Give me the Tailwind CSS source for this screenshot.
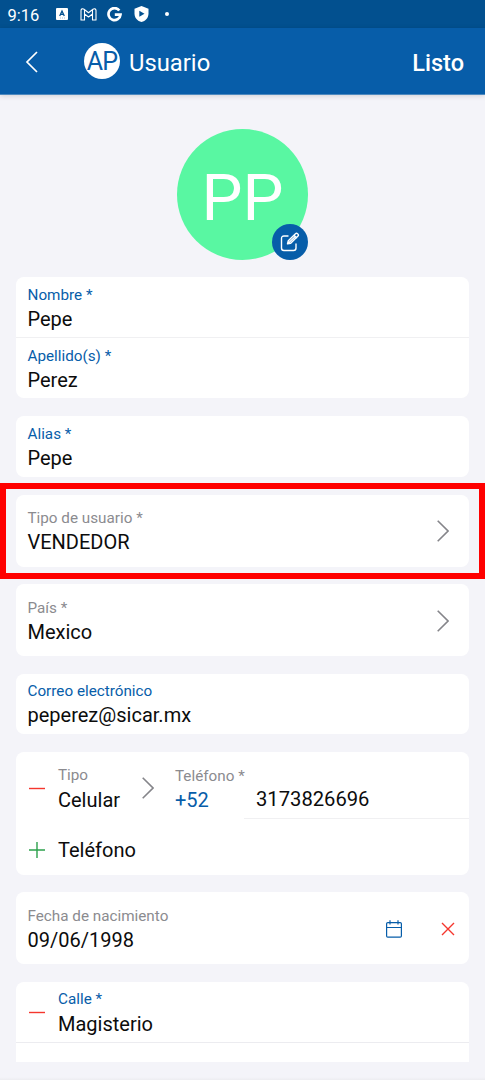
<!DOCTYPE html>
<html lang="es">
<head>
<meta charset="utf-8">
<title>Usuario</title>
<script src="https://cdn.jsdelivr.net/npm/@tailwindcss/browser@4"></script>
</head>
<body class="relative flex h-[1080px] w-[485px] flex-col overflow-hidden bg-[#f4f4f9] font-['Roboto',sans-serif] text-[20px] leading-[28px] text-[#0c0c0c]">
<div class="flex h-7 shrink-0 items-center bg-[#02508f] pl-[7.500px] text-white">
  <span class="w-[48px] pt-1 text-[16.500px] leading-[26px]">9:16</span>
  <svg class="h-3 w-3" viewBox="0 0 12 12"><rect width="12" height="12" rx="1" fill="#fff"/><path d="M3.7 8 6 3l2.3 5M4.6 6.4h2.8" fill="none" stroke="#02508f" stroke-width="1.3"/><path d="M4 10h1M6 10h1M8 10h1" stroke="#8fb0cf" stroke-width=".8"/></svg>
  <svg class="ml-[12px] h-[13px] w-[17px]" viewBox="0 0 17 13" fill="none" stroke="#fff" stroke-width="1.1" stroke-linejoin="round"><path d="M1 2.5C1 .8 2.8.3 4 1.2L8.5 4.700 13 1.200C14.200.300 16 .8 16 2.500V12H12.500V6L8.500 9 4.500 6v6H1zM4.500 2v4M12.500 2v4"/></svg>
  <svg class="ml-[10px] h-[15px] w-[15px]" viewBox="0 0 15 15" fill="none" stroke="#fff" stroke-width="2.700"><path d="M12.300 3.500A6 6 0 1 0 13.500 7.600H7.800"/></svg>
  <svg class="ml-[12px] h-4 w-[15px]" viewBox="0 0 15 16"><path d="M7.500 0 14.500 2.700V7.500C14.500 12 11.500 15 7.500 16 3.500 15 .5 12 .5 7.500V2.700z" fill="#fff"/><path d="M5.300 4.700v6L10.500 7.700z" fill="#02508f"/></svg>
  <i class="ml-[16px] h-1 w-1 rounded-full bg-white"></i>
</div>
<header class="flex h-[67px] shrink-0 items-center border-b border-[#4d89bf] bg-[#075da9] pr-[21px] pl-[25px] text-white shadow-[0_1px_5px_#00000025]">
  <svg class="mt-px h-[22px] w-[13px]" viewBox="0 0 13 22" fill="none" stroke="#fff" stroke-width="1.700"><path d="M12 1 2 11l10 10"/></svg>
  <div class="ml-[46px] flex h-9 w-9 items-center justify-center overflow-hidden rounded-full bg-white pt-0.5 text-[25px] tracking-[-0.8px] text-[#075da9]">AP</div>
  <h1 class="ml-[9px] grow pt-1 text-[23.800px]">Usuario</h1>
  <span class="pt-1 text-[23.500px] font-medium">Listo</span>
</header>
<main class="flex flex-col gap-[18px] px-4">
  <div class="flex h-[165px] items-end justify-center">
    <div class="relative flex h-[131px] w-[131px] items-center justify-center rounded-full bg-[#59f7a2] pt-1.5 text-[65px] text-white">PP
      <div class="absolute right-0 bottom-0 flex h-9 w-9 items-center justify-center rounded-full bg-[#075da9]">
        <svg class="h-5 w-5" viewBox="0 0 20 20" fill="none" stroke="#fff" stroke-width="1.400" stroke-linejoin="round" stroke-linecap="round"><path d="M8 4H4Q1.500 4 1.500 6.500V16Q1.500 18.500 4 18.500H13.500Q16 18.500 16 16V12"/><path d="M7.500 11.800 8.300 8.700 15.500 1.700Q16.500.8 17.600 1.800 19 3 18 4.100L10.700 11.200zM14 3.200l2.600 2.500M9 10.500l5.500-5.300"/></svg>
      </div>
    </div>
  </div>
  <section class="-mt-px flex h-[121px] flex-col rounded-lg bg-white">
    <div class="h-[61px] border-b border-[#f0f0f2] px-[11.500px] pt-2"><div class="text-[15.250px] leading-5 text-[#075da9]">Nombre *</div><div>Pepe</div></div>
    <div class="px-[11.500px] pt-2"><div class="text-[15.250px] leading-5 text-[#075da9]">Apellido(s) *</div><div>Perez</div></div>
  </section>
  <section class="h-[60.500px] rounded-lg bg-white px-[11.500px] pt-2"><div class="text-[15.250px] leading-5 text-[#075da9]">Alias *</div><div>Pepe</div></section>
  <section class="flex h-[72px] items-center justify-between rounded-lg bg-white pr-5 pl-[11.500px]">
    <div class="pt-[3px]"><div class="text-[15.250px] leading-5 text-[#8b8b8f]">Tipo de usuario *</div><div>VENDEDOR</div></div>
    <svg class="mt-px h-[22px] w-3" viewBox="0 0 12 22" fill="none" stroke="#85858a" stroke-width="1.600"><path d="M.7.8 11 11 .7 21.200"/></svg>
  </section>
  <section class="-mt-[0.500px] flex h-[72px] items-center justify-between rounded-lg bg-white pr-5 pl-[11.500px]">
    <div class="pt-[3px]"><div class="text-[15.250px] leading-5 text-[#8b8b8f]">País *</div><div>Mexico</div></div>
    <svg class="mt-px h-[22px] w-3" viewBox="0 0 12 22" fill="none" stroke="#85858a" stroke-width="1.600"><path d="M.7.8 11 11 .7 21.200"/></svg>
  </section>
  <section class="h-[60px] rounded-lg bg-white px-[11.500px] pt-[7px]"><div class="text-[15.250px] leading-5 text-[#075da9]">Correo electrónico</div><div>peperez@sicar.mx</div></section>
  <section class="h-[123px] rounded-lg bg-white pl-3">
    <div class="flex h-[67px]">
      <svg class="mt-[27px] h-[18px] w-[18px]" viewBox="0 0 18 18"><path d="M1 9.500h16" stroke="#f5362d" stroke-width="1.400"/></svg>
      <div class="ml-[12px] w-[84px] pt-[13px]"><div class="text-[15.250px] leading-5 text-[#8b8b8f]">Tipo</div><div class="pt-px">Celular</div></div>
      <svg class="mt-[25px] h-[22px] w-3" viewBox="0 0 12 22" fill="none" stroke="#85858a" stroke-width="1.600"><path d="M.7.8 11 11 .7 21.200"/></svg>
      <div class="ml-[21px] w-[69px] pt-[14px] whitespace-nowrap"><div class="text-[15.250px] leading-5 text-[#8b8b8f]">Teléfono *</div><div class="text-[#075da9]">+52</div></div>
      <div class="grow border-b border-[#f0f0f2] pt-[33px] pl-[12px] text-[20.200px]">3173826696</div>
    </div>
    <div class="flex items-center pt-[17px]">
      <svg class="h-[18px] w-[18px]" viewBox="0 0 18 18"><path d="M1 9h16M9 1v16" stroke="#2da14c" stroke-width="1.400"/></svg>
      <span class="ml-3">Teléfono</span>
    </div>
  </section>
  <section class="-mt-px flex h-[72px] items-center rounded-lg bg-white pr-[14px] pl-[11.500px]">
    <div class="grow pt-[3px]"><div class="text-[15.250px] leading-5 text-[#8b8b8f]">Fecha de nacimiento</div><div>09/06/1998</div></div>
    <svg class="mt-px h-[18px] w-4" viewBox="0 0 16 18" fill="none" stroke="#075da9" stroke-width="1.200"><rect x=".6" y="2.600" width="14.800" height="14.500" rx="1.200"/><path d="M.6 7.500h14.800M4 .2v4.300M12 .2v4.300"/></svg>
    <svg class="mt-px ml-[39px] h-[14px] w-[14px]" viewBox="0 0 14 14" stroke="#f5362d" stroke-width="1.400"><path d="m1 1 12 12M13 1 1 13"/></svg>
  </section>
  <section class="h-[80px] rounded-t-lg bg-white">
    <div class="flex h-[61px] border-b border-[#ececf0] pl-3">
      <svg class="mt-[22px] h-[18px] w-[18px]" viewBox="0 0 18 18"><path d="M1 8.500h16" stroke="#f5362d" stroke-width="1.400"/></svg>
      <div class="ml-3 pt-[7px]"><div class="text-[15.250px] leading-5 text-[#075da9]">Calle *</div><div class="pt-px">Magisterio</div></div>
    </div>
  </section>
</main>
<div class="mt-auto h-[3px] bg-linear-to-b from-[#f4f4f9] to-[#ededf1]"></div>
<div class="absolute top-[483px] left-0 h-24 w-[485px] border-6 border-[#ff0000]"></div>
</body>
</html>
